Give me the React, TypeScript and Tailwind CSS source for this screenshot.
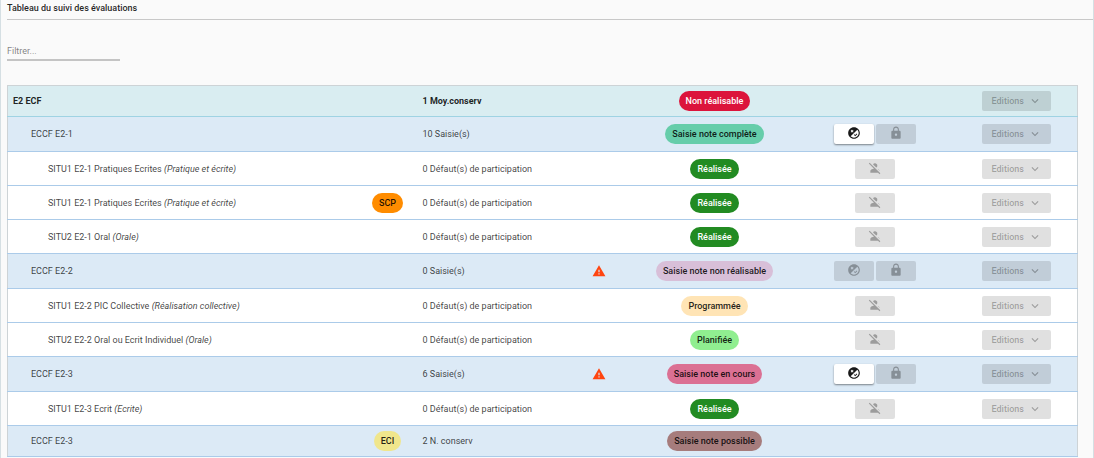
import React from "react";
import clsx from "clsx";
import {
  MdExpandMore,
  MdFlaky,
  MdLock,
  MdPersonOff,
  MdWarning,
} from "react-icons/md";

type Row = {
  level: 0 | 1 | 2;
  name: string;
  kind?: string;
  tag?: string;
  tagColor?: string;
  count: string;
  warning?: boolean;
  status: string;
  statusColor: string;
  canGrade?: boolean;
  noActions?: boolean;
};

const GREEN = "bg-[#228b22] text-white";

const rows: Row[] = [
  {
    level: 0,
    name: "E2 ECF",
    count: "1 Moy.conserv",
    status: "Non réalisable",
    statusColor: "bg-[#dc143c] text-white",
  },
  {
    level: 1,
    name: "ECCF E2-1",
    count: "10 Saisie(s)",
    status: "Saisie note complète",
    statusColor: "bg-[#66cdaa]",
    canGrade: true,
  },
  {
    level: 2,
    name: "SITU1 E2-1 Pratiques Ecrites",
    kind: "(Pratique et écrite)",
    count: "0 Défaut(s) de participation",
    status: "Réalisée",
    statusColor: GREEN,
  },
  {
    level: 2,
    name: "SITU1 E2-1 Pratiques Ecrites",
    kind: "(Pratique et écrite)",
    tag: "SCP",
    tagColor: "bg-[#ff8c00]",
    count: "0 Défaut(s) de participation",
    status: "Réalisée",
    statusColor: GREEN,
  },
  {
    level: 2,
    name: "SITU2 E2-1 Oral",
    kind: "(Orale)",
    count: "0 Défaut(s) de participation",
    status: "Réalisée",
    statusColor: GREEN,
  },
  {
    level: 1,
    name: "ECCF E2-2",
    count: "0 Saisie(s)",
    warning: true,
    status: "Saisie note non réalisable",
    statusColor: "bg-[#d8bfd8]",
  },
  {
    level: 2,
    name: "SITU1 E2-2 PIC Collective",
    kind: "(Réalisation collective)",
    count: "0 Défaut(s) de participation",
    status: "Programmée",
    statusColor: "bg-[#ffe4b5]",
  },
  {
    level: 2,
    name: "SITU2 E2-2 Oral ou Ecrit Individuel",
    kind: "(Orale)",
    count: "0 Défaut(s) de participation",
    status: "Planifiée",
    statusColor: "bg-[#90ee90]",
  },
  {
    level: 1,
    name: "ECCF E2-3",
    count: "6 Saisie(s)",
    warning: true,
    status: "Saisie note en cours",
    statusColor: "bg-[#db7093]",
    canGrade: true,
  },
  {
    level: 2,
    name: "SITU1 E2-3 Ecrit",
    kind: "(Ecrite)",
    count: "0 Défaut(s) de participation",
    status: "Réalisée",
    statusColor: GREEN,
  },
  {
    level: 1,
    name: "ECCF E2-3",
    tag: "ECI",
    tagColor: "bg-[#f0e68c]",
    count: "2 N. conserv",
    status: "Saisie note possible",
    statusColor: "bg-[#a67c7c]",
    noActions: true,
  },
];

function Chip({ color, children }: { color?: string; children: React.ReactNode }) {
  return (
    <span
      className={clsx(
        "inline-flex h-5 items-center rounded-full px-[7px] font-medium",
        color,
      )}
    >
      {children}
    </span>
  );
}

function IconButton({
  label,
  enabled,
  children,
}: {
  label: string;
  enabled?: boolean;
  children: React.ReactNode;
}) {
  return (
    <button
      type="button"
      aria-label={label}
      disabled={!enabled}
      className={clsx(
        "flex h-5 w-10 items-center justify-center rounded-xs pb-0.5",
        enabled
          ? "bg-white text-black/90 shadow-[0_1px_2px_rgba(0,0,0,0.45)]"
          : "bg-black/12 text-black/30",
      )}
    >
      {children}
    </button>
  );
}

function Actions({ row }: { row: Row }) {
  if (row.level === 0 || row.noActions) return null;
  return (
    <div className="flex justify-center gap-0.5">
      {row.level === 1 ? (
        <>
          <IconButton label="Saisir les notes" enabled={row.canGrade}>
            <MdFlaky className="size-3.5" />
          </IconButton>
          <IconButton label="Verrouiller">
            <MdLock className="size-3.5" />
          </IconButton>
        </>
      ) : (
        <IconButton label="Défaut de participation">
          <MdPersonOff className="size-3.5" />
        </IconButton>
      )}
    </div>
  );
}

function EvaluationRow({ row }: { row: Row }) {
  return (
    <tr
      className={clsx(
        "border-b",
        row.level === 0 && "h-[31px] border-[#9fd3e3] bg-[#d9edf1] font-bold text-black/87",
        row.level === 1 && "border-[#abcbe9] bg-[#dceaf6]",
        row.level === 1 && (row.noActions ? "h-[31px]" : "h-[35px]"),
        row.level === 2 && "h-[34px] border-[#abcbe9] bg-white",
      )}
    >
      <td
        className={clsx(
          row.level === 0 && "pl-[5px]",
          row.level === 1 && "pl-[23px]",
          row.level === 2 && "pl-10",
        )}
      >
        {row.name} {row.kind && <i>{row.kind}</i>}
      </td>
      <td className="text-center text-black/87">
        {row.tag && <Chip color={row.tagColor}>{row.tag}</Chip>}
      </td>
      <td className="pl-2.5">{row.count}</td>
      <td>
        {row.warning && (
          <MdWarning
            aria-label="Attention"
            className="mx-auto size-3.5 text-[#ff4510]"
          />
        )}
      </td>
      <td className="text-center text-black/87">
        <Chip color={row.statusColor}>{row.status}</Chip>
      </td>
      <td>
        <Actions row={row} />
      </td>
      <td>
        {!row.noActions && (
          <button
            type="button"
            disabled
            className="mx-auto flex h-5 w-[69px] items-center justify-center gap-1 rounded-xs bg-black/12 font-medium text-black/30"
          >
            Editions
            <MdExpandMore className="size-3.5" />
          </button>
        )}
      </td>
    </tr>
  );
}

export default function App() {
  return (
    <main className="min-h-screen border-x border-[#d5dfe3] bg-[#fafafa] pl-1.5 font-[Roboto,sans-serif] text-[9px] leading-3 text-black/75">
      <h1 className="border-b border-[#c8c8c8] pt-0.5 pb-[5px] font-medium text-black/87">
        Tableau du suivi des évaluations
      </h1>
      <input
        type="text"
        aria-label="Filtrer"
        placeholder="Filtrer..."
        className="mt-6 block h-[17px] w-[113px] border-b-2 border-[#c4c4c4] pb-0.5 outline-none placeholder:text-black/50"
      />
      <div className="mt-6 pr-[15px]">
        <table className="w-full table-fixed border border-[#cdd3d6]">
          <colgroup>
            <col />
            <col className="w-[50px]" />
            <col className="w-[148px]" />
            <col className="w-[76px]" />
            <col className="w-[156px]" />
            <col className="w-[164px]" />
            <col className="w-[121px]" />
          </colgroup>
          <tbody>
            {rows.map((row, i) => (
              <EvaluationRow key={i} row={row} />
            ))}
          </tbody>
        </table>
      </div>
    </main>
  );
}
